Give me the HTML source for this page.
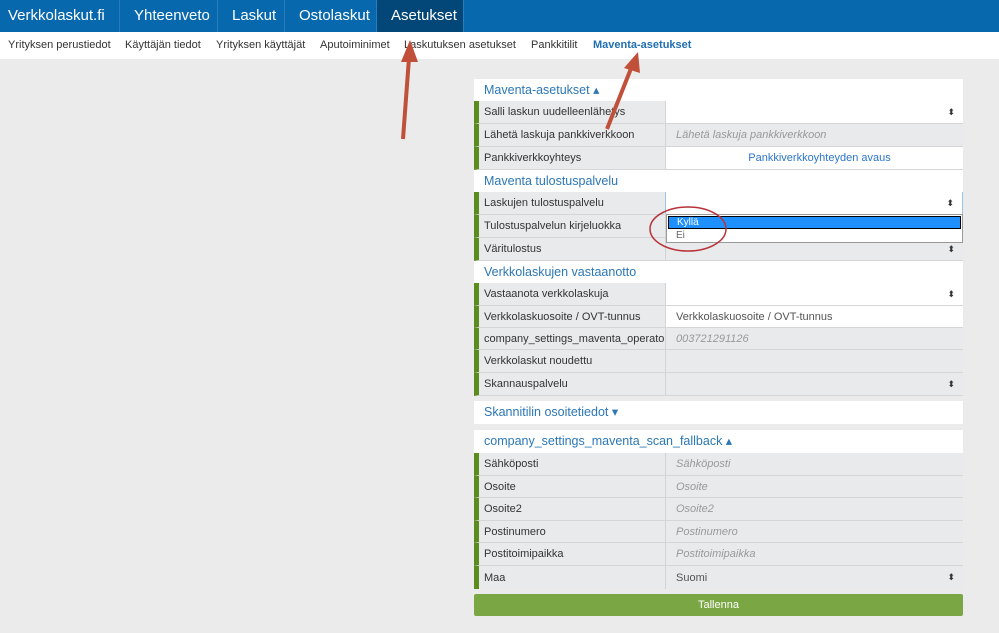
<!DOCTYPE html>
<html><head><meta charset="utf-8"><style>
*{margin:0;padding:0;box-sizing:border-box}
body{width:999px;height:633px;background:#ebebeb;font-family:"Liberation Sans",Arial,sans-serif;position:relative;overflow:hidden;font-size:11px;color:#333}
.nav{position:absolute;left:0;top:0;width:999px;height:32px;background:#0868ad}
.nav div{position:absolute;top:0;height:32px;line-height:32px;color:#fff;font-size:15px;border-right:1px solid #2a7cbd;padding:0 14px}
.sub{position:absolute;left:0;top:32px;width:999px;height:27px;background:#fff}
.sub span{position:absolute;top:7px;font-size:11px;color:#333}
.h{position:absolute;left:474px;width:489px;background:#fff;color:#2c77b5;font-size:12.5px;padding-left:10px;line-height:22px;height:23px}
.r{position:absolute;left:474px;width:489px;height:23px;border-left:5px solid #5b8c1e;border-bottom:1px solid #d6d6d6;background:#e9eaec}
.r .l{position:absolute;left:5px;top:0;bottom:0;display:flex;align-items:center;font-size:11px;color:#333}
.r .v{position:absolute;left:186px;top:0;bottom:0;width:298px;border-left:1px solid #d4d4d4;display:flex;align-items:center;padding-left:10px}
.w{background:#fff}
.ph{color:#999;font-style:italic}
.ar{position:absolute;right:8px;top:0;bottom:0;display:flex;align-items:center;font-size:9px;color:#333}
</style></head><body>
<div class="nav">
<div style="left:0;width:120px;padding-left:8px">Verkkolaskut.fi</div>
<div style="left:120px;width:98px">Yhteenveto</div>
<div style="left:218px;width:67px">Laskut</div>
<div style="left:285px;width:92px">Ostolaskut</div>
<div style="left:377px;width:87px;background:#024777">Asetukset</div>
</div>
<div class="sub">
<span style="left:8px">Yrityksen perustiedot</span>
<span style="left:125px">Käyttäjän tiedot</span>
<span style="left:216px">Yrityksen käyttäjät</span>
<span style="left:320px">Aputoiminimet</span>
<span style="left:404px">Laskutuksen asetukset</span>
<span style="left:531px">Pankkitilit</span>
<span style="left:593px;color:#1f6fb2;font-weight:bold">Maventa-asetukset</span>
</div>

<div class="h" style="top:79px;height:22px">Maventa-asetukset ▴</div>
<div class="r" style="top:101px;height:23px"><span class="l">Salli laskun uudelleenlähetys</span><div class="v w"><span class="ar">⬍</span></div></div>
<div class="r" style="top:124px;height:23px"><span class="l">Lähetä laskuja pankkiverkkoon</span><div class="v ph">Lähetä laskuja pankkiverkkoon</div></div>
<div class="r" style="top:147px;height:23px"><span class="l">Pankkiverkkoyhteys</span><div class="v w" style="justify-content:center;color:#2c77c9">Pankkiverkkoyhteyden avaus</div></div>

<div class="h" style="top:170px;height:22px">Maventa tulostuspalvelu</div>
<div class="r" style="top:192px;height:23px"><span class="l">Laskujen tulostuspalvelu</span><div class="v w" style="border-left:1px solid #9cc3e8;border-right:1px solid #9cc3e8"><span class="ar">⬍</span></div></div>
<div class="r" style="top:215px;height:23px"><span class="l">Tulostuspalvelun kirjeluokka</span><div class="v"></div></div>
<div class="r" style="top:238px;height:23px"><span class="l">Väritulostus</span><div class="v"><span class="ar">⬍</span></div></div>
<div style="position:absolute;left:666px;top:214px;width:297px;height:29px;background:#fff;border:1px solid #999">
<div style="margin:1px;height:13px;background:#1e90ff;border:1px solid #000;color:#fff;font-size:10px;line-height:11px;padding-left:8px">Kyllä</div>
<div style="height:13px;color:#666;font-size:10px;line-height:12px;padding-left:9px">Ei</div>
</div>

<div class="h" style="top:261px;height:22px">Verkkolaskujen vastaanotto</div>
<div class="r" style="top:283px;height:23px"><span class="l">Vastaanota verkkolaskuja</span><div class="v w"><span class="ar">⬍</span></div></div>
<div class="r" style="top:306px;height:22px"><span class="l">Verkkolaskuosoite / OVT-tunnus</span><div class="v w" style="color:#555">Verkkolaskuosoite / OVT-tunnus</div></div>
<div class="r" style="top:328px;height:22px"><span class="l">company_settings_maventa_operato</span><div class="v ph">003721291126</div></div>
<div class="r" style="top:350px;height:23px"><span class="l">Verkkolaskut noudettu</span><div class="v"></div></div>
<div class="r" style="top:373px;height:23px"><span class="l">Skannauspalvelu</span><div class="v"><span class="ar">⬍</span></div></div>

<div class="h" style="top:401px">Skannitilin osoitetiedot ▾</div>

<div class="h" style="top:430px">company_settings_maventa_scan_fallback ▴</div>
<div class="r" style="top:453px;height:23px"><span class="l">Sähköposti</span><div class="v ph">Sähköposti</div></div>
<div class="r" style="top:476px;height:22px"><span class="l">Osoite</span><div class="v ph">Osoite</div></div>
<div class="r" style="top:498px;height:23px"><span class="l">Osoite2</span><div class="v ph">Osoite2</div></div>
<div class="r" style="top:521px;height:22px"><span class="l">Postinumero</span><div class="v ph">Postinumero</div></div>
<div class="r" style="top:543px;height:23px"><span class="l">Postitoimipaikka</span><div class="v ph">Postitoimipaikka</div></div>
<div class="r" style="top:566px;height:23px;border-bottom:none"><span class="l">Maa</span><div class="v" style="color:#555">Suomi<span class="ar">⬍</span></div></div>

<div style="position:absolute;left:474px;top:594px;width:489px;height:22px;background:#7aa744;border-radius:2px;color:#fff;text-align:center;line-height:22px;font-size:11px">Tallenna</div>

<svg width="999" height="633" style="position:absolute;left:0;top:0">
<g stroke="#c0503a" stroke-width="4" fill="#c0503a">
<line x1="403" y1="139" x2="409" y2="58"/>
<polygon points="410,40 401,62 418,62" stroke="none"/>
<line x1="607" y1="129" x2="632" y2="66"/>
<polygon points="638,52 624,68 640,73" stroke="none"/>
</g>
<ellipse cx="688" cy="229" rx="38" ry="22" fill="none" stroke="#b8333a" stroke-width="1.5"/>
</svg>
</body></html>
